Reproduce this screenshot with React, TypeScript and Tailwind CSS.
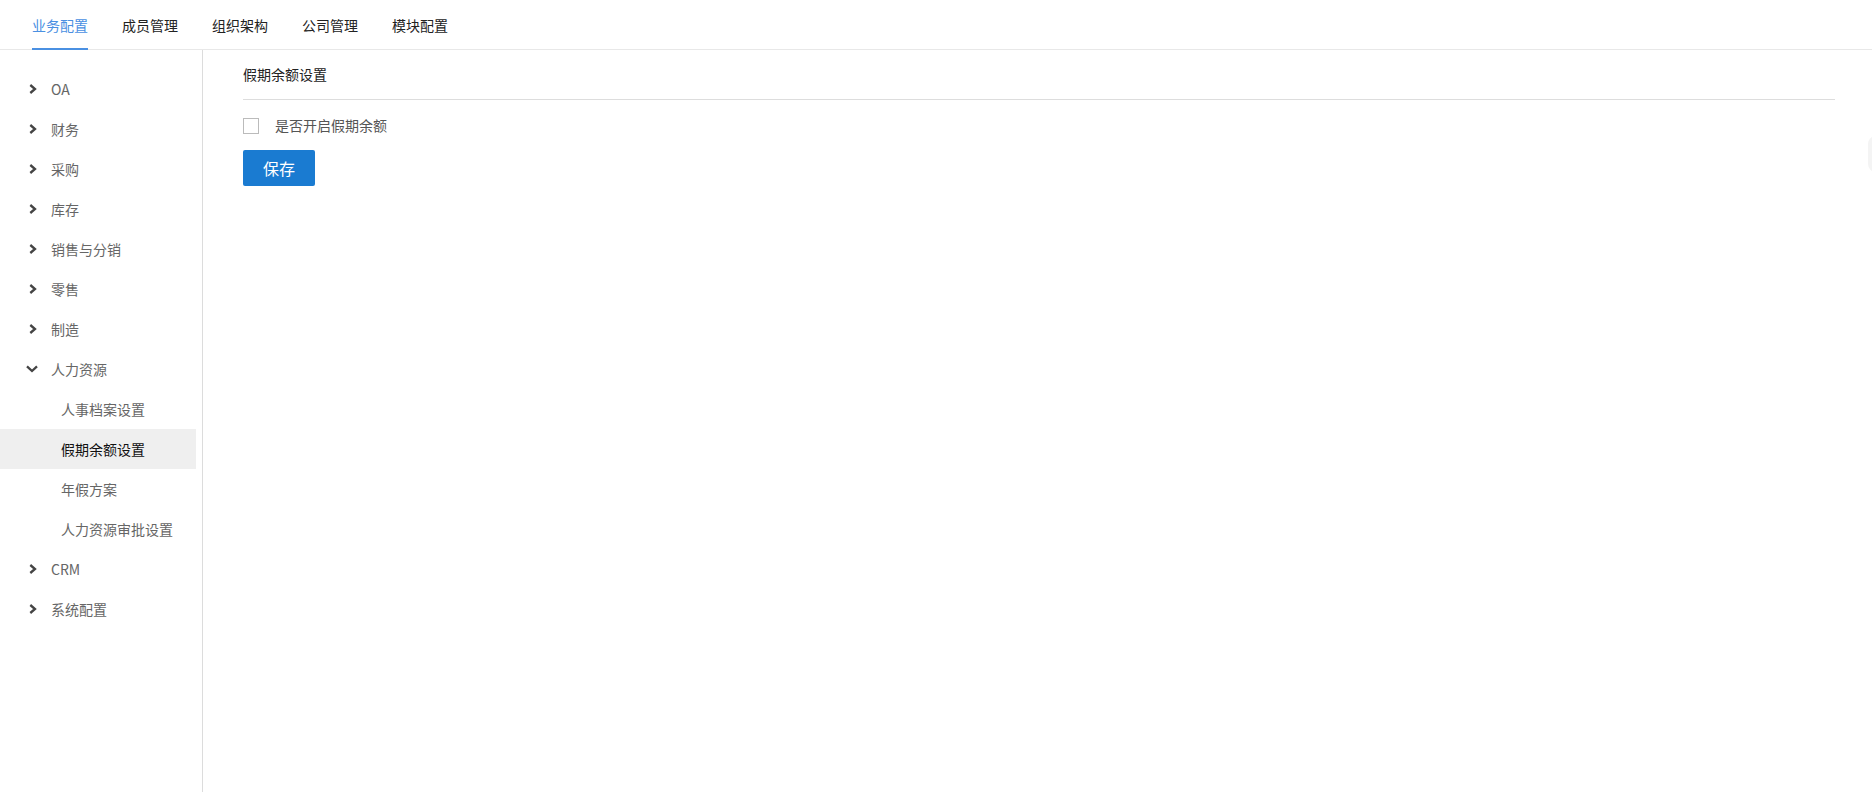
import React, { useState } from "react";

const tabs = ["业务配置", "成员管理", "组织架构", "公司管理", "模块配置"];

type MenuItem = { label: string; children?: string[] };

const menu: MenuItem[] = [
  { label: "OA" },
  { label: "财务" },
  { label: "采购" },
  { label: "库存" },
  { label: "销售与分销" },
  { label: "零售" },
  { label: "制造" },
  {
    label: "人力资源",
    children: ["人事档案设置", "假期余额设置", "年假方案", "人力资源审批设置"],
  },
  { label: "CRM" },
  { label: "系统配置" },
];

const ChevronRight = () => (
  <svg width="8" height="10" viewBox="0 0 8 10" className="shrink-0 ml-[29px]">
    <path d="M1.3 1 L6 5 L1.3 9" fill="none" stroke="#444" strokeWidth="2.3" />
  </svg>
);

const ChevronDown = () => (
  <svg width="12" height="8" viewBox="0 0 12 8" className="shrink-0 ml-[26px]">
    <path d="M1 1.3 L6 6 L11 1.3" fill="none" stroke="#444" strokeWidth="2.3" />
  </svg>
);

const App: React.FC = () => {
  const [enabled, setEnabled] = useState(false);
  const active = "假期余额设置";

  return (
    <div
      className="w-[1872px] h-[792px] bg-white flex flex-col overflow-hidden relative"
      style={{ fontFamily: '"Microsoft YaHei", "Noto Sans CJK SC", "Noto Sans", sans-serif' }}
    >
      {/* top tabs */}
      <div className="h-[50px] border-b border-[#e8e8e8] flex items-stretch pl-[32px] gap-[34px] shrink-0">
        {tabs.map((t, i) => (
          <div
            key={t}
            className={
              i === 0
                ? "flex items-center text-[14px] text-[#4a90e2] border-b-2 border-[#4a90e2] -mb-px pt-[2px]"
                : "flex items-center text-[14px] text-[#222] pt-[2px]"
            }
          >
            {t}
          </div>
        ))}
      </div>

      <div className="flex flex-1 min-h-0">
        {/* sidebar */}
        <div className="w-[203px] border-r border-[#dcdcdc] pt-[19px] shrink-0">
          {menu.map((m) => (
            <div key={m.label}>
              <div className="h-[40px] flex items-center text-[14px] text-[#666]">
                <div className="w-[51px] flex items-center">
                  {m.children ? <ChevronDown /> : <ChevronRight />}
                </div>
                <span>{m.label}</span>
              </div>
              {m.children &&
                m.children.map((c) => (
                  <div
                    key={c}
                    className={
                      c === active
                        ? "h-[40px] w-[196px] flex items-center pl-[61px] text-[14px] text-[#111] bg-[#efefef]"
                        : "h-[40px] w-[196px] flex items-center pl-[61px] text-[14px] text-[#666]"
                    }
                  >
                    {c}
                  </div>
                ))}
            </div>
          ))}
        </div>

        {/* content */}
        <div className="flex-1 pl-[40px] pr-[37px]">
          <div className="h-[50px] border-b border-[#dddddd] flex items-center text-[14px] text-[#222]">
            假期余额设置
          </div>
          <label className="flex items-center mt-[17px] h-[17px] cursor-pointer">
            <span
              onClick={() => setEnabled(!enabled)}
              className="w-[16px] h-[16px] border border-[#bbb] bg-white flex items-center justify-center"
            >
              {enabled && (
                <svg width="10" height="8" viewBox="0 0 10 8">
                  <path d="M1 4 L4 7 L9 1" fill="none" stroke="#1a7bd1" strokeWidth="2" />
                </svg>
              )}
            </span>
            <span className="ml-[16px] text-[14px] text-[#555]">是否开启假期余额</span>
          </label>
          <button className="mt-[16px] w-[72px] h-[36px] bg-[#1a7bd1] text-white text-[16px] rounded-[2px] flex items-center justify-center">
            保存
          </button>
        </div>
      </div>

      {/* faint edge handle */}
      <div className="absolute right-[-12px] top-[136px] w-[16px] h-[36px] rounded-full bg-[#f4f4f4]" />
    </div>
  );
};

export default App;
